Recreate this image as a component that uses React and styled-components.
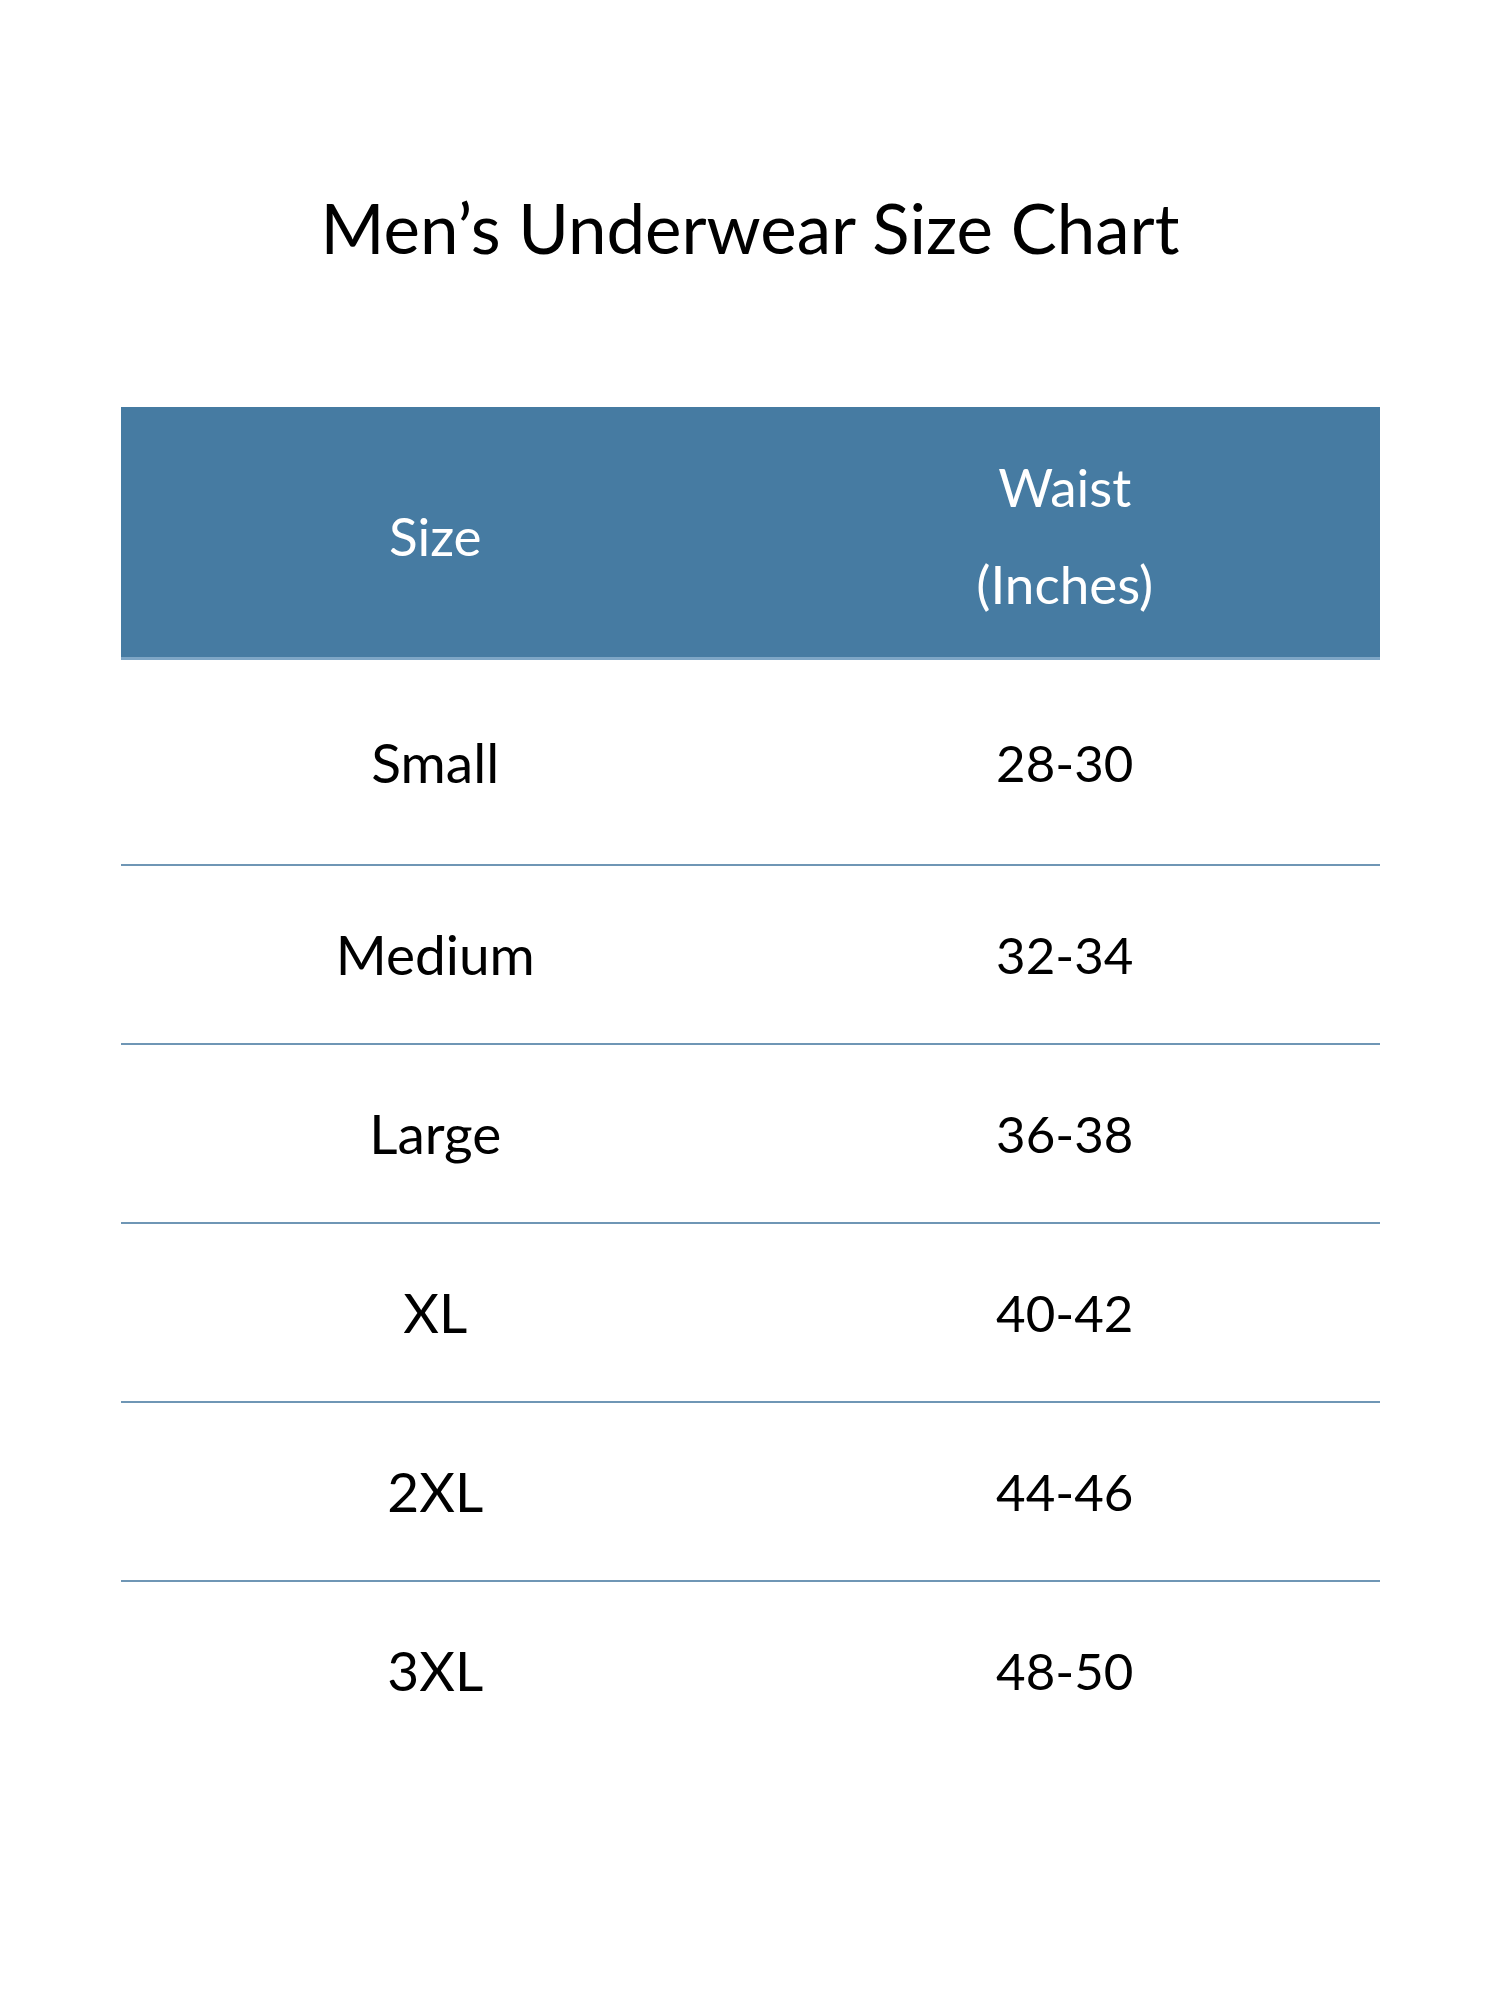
import React from "react";
import styled, { createGlobalStyle } from "styled-components";

const GlobalStyle = createGlobalStyle`
  html, body {
    margin: 0;
    padding: 0;
    background: #ffffff;
  }
  body {
    font-family: Lato, "Open Sans", "Liberation Sans", sans-serif;
    color: #000000;
  }
`;

const Page = styled.div`
  width: 1500px;
  min-height: 2000px;
  box-sizing: border-box;
  padding-top: 193px;
  background: #ffffff;
`;

const Title = styled.h1`
  margin: 0;
  font-family: Lato, "Open Sans", sans-serif;
  font-weight: 400;
  font-size: 69px;
  line-height: 1;
  text-align: center;
  color: #000000;
`;

const Table = styled.div`
  width: 1259px;
  margin: 145px auto 0;
  display: flex;
  flex-direction: column;
`;

const HeaderRow = styled.div`
  display: grid;
  grid-template-columns: 1fr 1fr;
  height: 250px;
  background: #467ba2;
  border-bottom: 3px solid #7ea6c6;
`;

const HeaderCell = styled.div`
  display: flex;
  flex-direction: column;
  align-items: center;
  justify-content: center;
  padding-top: 6px;
  color: #ffffff;
  font-size: 53px;
  line-height: 97px;
`;

const Row = styled.div`
  display: grid;
  grid-template-columns: 1fr 1fr;
  align-items: center;
  height: ${(p) => p.$h}px;
  border-bottom: ${(p) => (p.$last ? "none" : "2px solid #6f96b5")};
`;

const Cell = styled.div`
  text-align: center;
  font-size: ${(p) => (p.$num ? 51 : 55)}px;
  line-height: 1;
  color: #000000;
`;

const rows = [
  ["Small", "28-30"],
  ["Medium", "32-34"],
  ["Large", "36-38"],
  ["XL", "40-42"],
  ["2XL", "44-46"],
  ["3XL", "48-50"],
];

export default function App() {
  return (
    <>
      <GlobalStyle />
      <Page>
        <Title>Men’s Underwear Size Chart</Title>
        <Table>
          <HeaderRow>
            <HeaderCell>
              <span>Size</span>
            </HeaderCell>
            <HeaderCell>
              <span>Waist</span>
              <span>(Inches)</span>
            </HeaderCell>
          </HeaderRow>
          {rows.map(([size, waist], i) => (
            <Row key={size} $h={i === 0 ? 204 : 177} $last={i === rows.length - 1}>
              <Cell>{size}</Cell>
              <Cell $num>{waist}</Cell>
            </Row>
          ))}
        </Table>
      </Page>
    </>
  );
}
